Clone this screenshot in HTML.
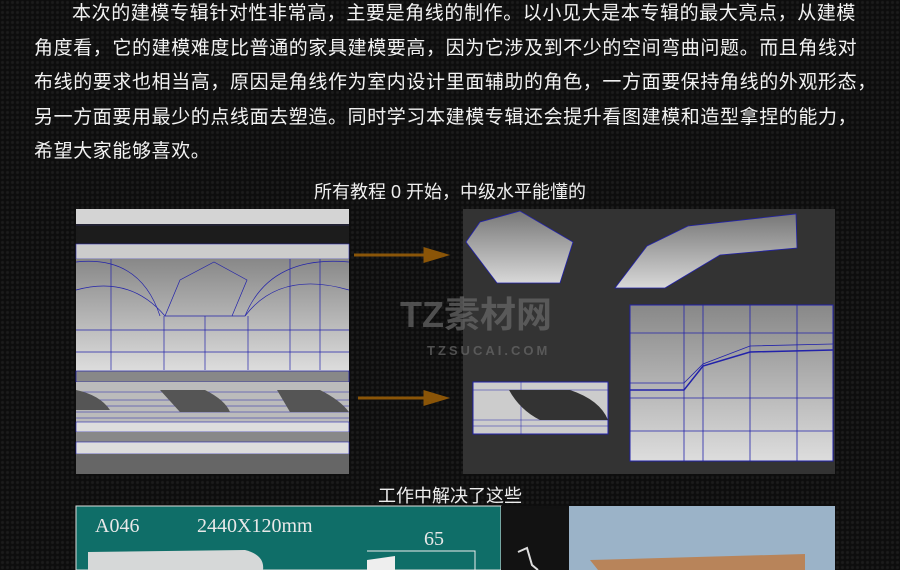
<!DOCTYPE html>
<html><head><meta charset="utf-8"><style>
*{margin:0;padding:0}
body{width:900px;height:570px;overflow:hidden;background:#0d0d0d;background-image:radial-gradient(circle at 50% 50%,#1c1c1c 1px,transparent 2px);background-size:5px 5px;font-family:"Liberation Sans","Noto Sans CJK SC",sans-serif;color:#f2f2f2;position:relative}
.p{position:absolute;left:34px;top:-3px;width:860px;font-size:19px;line-height:34.5px;letter-spacing:0.6px;white-space:nowrap}
.t{position:absolute;font-size:18px;color:#eee;width:900px;text-align:center}
</style></head><body>
<div class="p"><span style="padding-left:38px"></span>本次的建模专辑针对性非常高，主要是角线的制作。以小见大是本专辑的最大亮点，从建模<br>角度看，它的建模难度比普通的家具建模要高，因为它涉及到不少的空间弯曲问题。而且角线对<br>布线的要求也相当高，原因是角线作为室内设计里面辅助的角色，一方面要保持角线的外观形态，<br>另一方面要用最少的点线面去塑造。同时学习本建模专辑还会提升看图建模和造型拿捏的能力，<br>希望大家能够喜欢。</div>
<div class="t" style="top:178px">所有教程 0 开始，中级水平能懂的</div>
<svg style="position:absolute;left:0;top:0" width="900" height="570">
<defs>
<linearGradient id="g1" x1="0" y1="0" x2="0" y2="1"><stop offset="0" stop-color="#888"/><stop offset="1" stop-color="#ddd"/></linearGradient>
<linearGradient id="g2" x1="0" y1="0" x2="0" y2="1"><stop offset="0" stop-color="#777"/><stop offset="1" stop-color="#d8d8d8"/></linearGradient>
</defs>
<rect x="76" y="209" width="273" height="265" fill="#d4d4d4"/>
<rect x="76" y="224" width="273" height="3" fill="#223"/>
<rect x="76" y="226" width="273" height="18" fill="#1c1c1c"/>
<rect x="76" y="244" width="273" height="15" fill="#ccc" stroke="#33a" stroke-width="0.6"/>
<rect x="76" y="259" width="273" height="112" fill="url(#g1)"/>
<g stroke="#22a" stroke-width="0.7" fill="none">
<path d="M76 290 Q130 275 165 316 L245 316 Q280 270 349 290"/>
<path d="M76 262 Q140 255 160 316 M245 316 Q270 255 349 262"/>
<path d="M165 316 L180 280 L214 262 L247 280 L232 316"/>
<line x1="76" y1="330" x2="349" y2="330"/><line x1="76" y1="352" x2="349" y2="352"/>
<line x1="111" y1="259" x2="111" y2="370"/><line x1="164" y1="316" x2="164" y2="370"/><line x1="248" y1="316" x2="248" y2="370"/><line x1="290" y1="259" x2="290" y2="370"/><line x1="320" y1="259" x2="320" y2="370"/><line x1="205" y1="316" x2="205" y2="370"/>
</g>
<rect x="76" y="371" width="273" height="11" fill="#888" stroke="#22a" stroke-width="0.7"/>
<rect x="76" y="382" width="273" height="40" fill="#bbb"/>
<g stroke="#22a" stroke-width="0.5">
<line x1="76" y1="392" x2="349" y2="392"/><line x1="76" y1="400" x2="349" y2="400"/><line x1="76" y1="406" x2="349" y2="406"/><line x1="76" y1="412" x2="349" y2="412"/><line x1="76" y1="418" x2="349" y2="418"/>
</g>
<path d="M76 390 Q100 395 110 410 L76 410Z M160 390 L205 390 Q225 400 230 412 L180 412Z M277 390 L320 390 Q340 400 349 412 L290 412Z" fill="#555"/>
<rect x="76" y="422" width="273" height="10" fill="#ddd" stroke="#22a" stroke-width="0.6"/>
<rect x="76" y="432" width="273" height="10" fill="#888"/>
<rect x="76" y="442" width="273" height="12" fill="#ddd" stroke="#22a" stroke-width="0.6"/>
<rect x="76" y="454" width="273" height="20" fill="#666"/>
<path d="M354 255 L425 255 L425 249 L445 255 L425 261 L425 255" stroke="#8a5508" stroke-width="3" fill="#8a5508"/>
<path d="M358 398 L425 398 L425 392 L445 398 L425 404 L425 398" stroke="#8a5508" stroke-width="3" fill="#8a5508"/>
<rect x="463" y="209" width="372" height="265" fill="#333"/>
<path d="M466 242 L480 222 L520 211 L573 242 L560 283 L497 283Z" fill="url(#g2)" stroke="#22a" stroke-width="0.8"/>
<path d="M615 288 L647 246 L688 226 L796 214 L797 248 L720 255 L665 288Z" fill="url(#g2)" stroke="#22a" stroke-width="0.8"/>
<rect x="630" y="305" width="203" height="156" fill="url(#g1)" stroke="#22a"/>
<g stroke="#22a" stroke-width="0.8" fill="none">
<line x1="684" y1="305" x2="684" y2="461"/><line x1="703" y1="305" x2="703" y2="461"/><line x1="750" y1="305" x2="750" y2="461"/><line x1="797" y1="305" x2="797" y2="461"/>
<line x1="630" y1="333" x2="833" y2="333"/><line x1="630" y1="398" x2="833" y2="398"/><line x1="630" y1="431" x2="833" y2="431"/>
<path d="M630 390 L684 390 L703 366 L750 352 L833 350" stroke-width="1.5"/>
<path d="M630 383 L684 383 L703 364 L750 346 L833 344"/>
</g>
<rect x="473" y="382" width="135" height="52" fill="#ccc" stroke="#22a"/>
<g stroke="#22a" stroke-width="0.5"><line x1="473" y1="390" x2="608" y2="390"/><line x1="473" y1="420" x2="608" y2="420"/><line x1="473" y1="426" x2="608" y2="426"/><line x1="521" y1="382" x2="521" y2="434"/></g>
<path d="M509 390 L570 390 Q600 400 608 420 L540 420 Q520 410 509 390Z" fill="#333"/>
<text x="400" y="327" font-family="Liberation Sans,Noto Sans CJK SC,sans-serif" font-size="36" font-weight="bold" fill="#6a6a6a" opacity="0.7">TZ素材网</text>
<text x="427" y="355" font-family="Liberation Sans,sans-serif" font-size="13" font-weight="bold" letter-spacing="3" fill="#6a6a6a" opacity="0.7">TZSUCAI.COM</text>
<rect x="76" y="506" width="425" height="64" fill="#0f6e68"/>
<rect x="76" y="506" width="425" height="64" fill="none" stroke="#ddd" stroke-width="1"/>
<text x="95" y="532" font-family="Liberation Serif,serif" font-size="20" fill="#e8e8e8">A046</text>
<text x="197" y="532" font-family="Liberation Serif,serif" font-size="20" fill="#e8e8e8">2440X120mm</text>
<text x="424" y="545" font-family="Liberation Serif,serif" font-size="20" fill="#e8e8e8">65</text>
<path d="M88 552 L245 550 Q265 555 263 570 L88 570Z" fill="#d6d8d8"/>
<path d="M367 551 L475 551 L475 570" stroke="#eee" fill="none"/>
<path d="M367 560 L395 556 L395 570 L367 570Z" fill="#eee"/>
<rect x="501" y="506" width="68" height="64" fill="#121212"/>
<path d="M518 552 L527 548 L532 565 L538 570" stroke="#ddd" stroke-width="2" fill="none"/>
<rect x="569" y="506" width="266" height="64" fill="#9bb3c8"/>
<path d="M590 560 L805 554 L805 570 L598 570Z" fill="#b8845a"/>
</svg>
<div class="t" style="top:482px">工作中解决了这些</div>
</body></html>
